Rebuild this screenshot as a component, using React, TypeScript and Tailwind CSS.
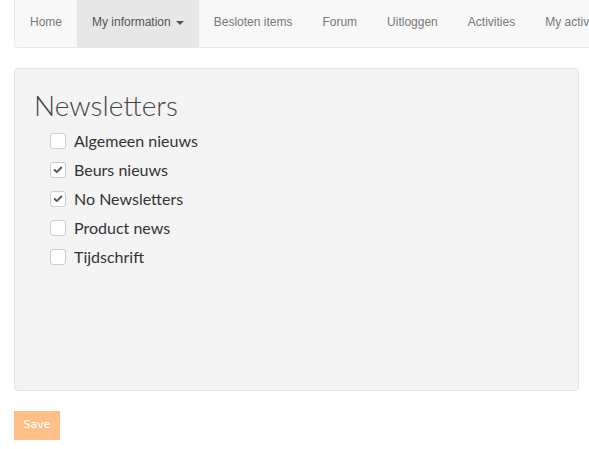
import { Check } from "lucide-react"

const navItems = ["Home", "My information", "Besloten items", "Forum", "Uitloggen", "Activities", "My activities"]

const newsletters = [
  { label: "Algemeen nieuws", checked: false },
  { label: "Beurs nieuws", checked: true },
  { label: "No Newsletters", checked: true },
  { label: "Product news", checked: false },
  { label: "Tijdschrift", checked: false },
]

export default function App() {
  return (
    <div className="w-[589px] h-[449px] overflow-hidden bg-white">
      <nav className="ml-[14px] w-[700px] h-[48px] flex bg-[#f8f8f8] border-x border-b border-[#e7e7e7] rounded-b-[4px] font-['Liberation_Sans',Arial,sans-serif] text-[12px]">
        {navItems.map((item) => {
          const active = item === "My information"
          return (
            <div
              key={item}
              className={`h-[47px] px-[15px] pt-[15px] leading-[14px] whitespace-nowrap ${active ? "bg-[#e7e7e7] text-[#555]" : "text-[#777]"}`}
            >
              {item}
              {active && (
                <span className="inline-block ml-[5px] align-middle w-0 h-0 border-x-[4px] border-x-transparent border-t-[4px] border-t-[#555]" />
              )}
            </div>
          )
        })}
      </nav>

      <div className="ml-[14px] mt-[20px] w-[565px] h-[323px] bg-[#f4f4f4] border border-[#e3e3e3] rounded-[4px] px-[19px] pt-[18px] font-['Lato',sans-serif]">
        <h2 className="text-[28px] font-light leading-[36px] text-[#444]">Newsletters</h2>
        <ul className="mt-[3px] ml-[16px] flex flex-col">
          {newsletters.map((n) => (
            <li key={n.label} className="h-[29px] flex items-center gap-[8px]">
              <span className="w-[16px] h-[16px] bg-white border border-[#ccc] rounded-[3px] flex items-center justify-center">
                {n.checked && <Check className="w-[10px] h-[10px] text-[#555]" strokeWidth={4.5} />}
              </span>
              <span className="text-[16px] text-[#333]">{n.label}</span>
            </li>
          ))}
        </ul>
      </div>

      <button className="ml-[14px] mt-[20px] w-[46px] h-[29px] bg-[#ffbf87] text-white text-[11px] font-['DejaVu_Sans',sans-serif]">
        Save
      </button>
    </div>
  )
}
